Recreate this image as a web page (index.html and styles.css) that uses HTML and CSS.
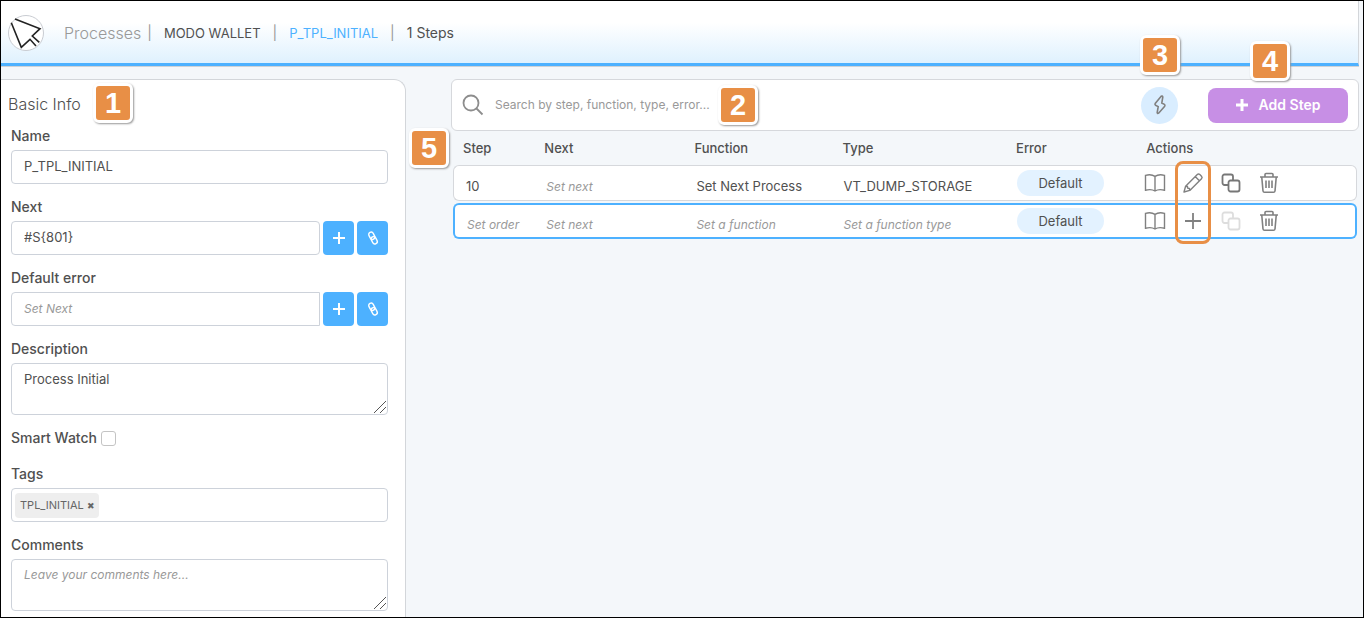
FILE: index.html
```html
<!DOCTYPE html>
<html lang="en">
<head>
<meta charset="utf-8">
<title>Processes</title>
<link rel="stylesheet" href="styles.css">
</head>
<body>
<svg class="sprite" aria-hidden="true">
  <symbol id="plus" viewBox="0 0 16 16"><path d="M8 2v12M2 8h12" fill="none" stroke="currentColor" stroke-width="2"/></symbol>
  <symbol id="plus-thin" viewBox="0 0 22 22"><path d="M11 3v16M3 11h16" fill="none" stroke="currentColor" stroke-width="1.8"/></symbol>
  <symbol id="link" viewBox="0 0 16 16"><g fill="none" stroke="currentColor" stroke-width="1.4" transform="rotate(-28 8 8)"><rect x="5.6" y="1.6" width="4.8" height="7.6" rx="2.4"/><rect x="5.6" y="6.8" width="4.8" height="7.6" rx="2.4"/></g></symbol>
  <symbol id="book" viewBox="0 0 22 20"><path d="M11 3.4C8.5 1.6 4 1.6 1.5 2.3V17.2C4.5 16.4 8.5 16.4 11 18C13.5 16.4 17.5 16.4 20.5 17.2V2.3C18 1.6 13.5 1.6 11 3.4zM11 3.4V18" fill="none" stroke="currentColor" stroke-width="1.4"/></symbol>
  <symbol id="pencil" viewBox="0 0 22 22"><path d="M2 20L3.6 14.2L15.3 2.5Q16.500 1.300 17.800 2.500L19.500 4.200Q20.700 5.500 19.500 6.700L7.800 18.400zM13.200 4.600L17.400 8.800M3.600 14.200L5.500 14.500L5.800 16.200L7.500 16.500L7.800 18.400" fill="none" stroke="currentColor" stroke-width="1.4" stroke-linejoin="round"/></symbol>
  <symbol id="copy" viewBox="0 0 22 22"><rect x="8.5" y="8.5" width="11" height="11" rx="2"/><path d="M8.5 13H4.500a2 2 0 0 1-2-2V4.500a2 2 0 0 1 2-2H11a2 2 0 0 1 2 2V8.500"/></symbol>
  <symbol id="trash" viewBox="0 0 22 22"><path d="M2 5H20M7 5V2.500Q7 1.500 8 1.500H14Q15 1.500 15 2.500V5M3.800 5.500L5 19Q5.200 20.300 6.500 20.300H15.500Q16.800 20.300 17 19L18.200 5.500M8 8.500V16M11 8.500V16M14 8.500V16" fill="none" stroke="currentColor" stroke-width="1.6"/></symbol>
</svg>

<header class="topbar">
  <a class="logo" href="#" aria-label="Home">
    <svg viewBox="0 0 34 34"><path d="M6 3L31 12.700L23.300 20L30.300 26.300M2.300 6.700L12.300 31.300L21 23.300L27 30" fill="none" stroke="#222" stroke-width="1.6"/></svg>
  </a>
  <nav class="crumbs" aria-label="Breadcrumb">
    <a class="crumb-root" href="#">Processes</a>
    <span class="bar">|</span>
    <a href="#">MODO WALLET</a>
    <span class="bar">|</span>
    <a class="crumb-active" href="#">P_TPL_INITIAL</a>
    <span class="bar">|</span>
    <span class="steps">1 Steps</span>
  </nav>
</header>

<div class="workspace">
  <aside class="panel">
    <h1>Basic Info</h1>
    <form class="fields">
      <div class="field">
        <label for="name">Name</label>
        <input class="control" id="name" type="text" value="P_TPL_INITIAL">
      </div>
      <div class="field">
        <label for="next">Next</label>
        <div class="combo">
          <input class="control" id="next" type="text" value="#S{801}">
          <button type="button" aria-label="Add next"><svg><use href="#plus"/></svg></button>
          <button type="button" aria-label="Link next"><svg><use href="#link"/></svg></button>
        </div>
      </div>
      <div class="field">
        <label for="error">Default error</label>
        <div class="combo">
          <input class="control square" id="error" type="text" placeholder="Set Next">
          <button type="button" aria-label="Add error"><svg><use href="#plus"/></svg></button>
          <button type="button" aria-label="Link error"><svg><use href="#link"/></svg></button>
        </div>
      </div>
      <div class="field">
        <label for="description">Description</label>
        <div class="area">
          <textarea class="control" id="description">Process Initial</textarea>
          <svg class="grip" viewBox="0 0 14 14"><path d="M1 13L13 1M7 13L13 7"/></svg>
        </div>
      </div>
      <div class="field check">
        <label for="watch">Smart Watch</label>
        <input id="watch" type="checkbox">
      </div>
      <div class="field">
        <label for="tags">Tags</label>
        <div class="control tags">
          <span class="tag">TPL_INITIAL <button type="button" aria-label="Remove tag">✖</button></span>
          <input id="tags" type="text">
        </div>
      </div>
      <div class="field">
        <label for="comments">Comments</label>
        <div class="area">
          <textarea class="control" id="comments" placeholder="Leave your comments here..."></textarea>
          <svg class="grip" viewBox="0 0 14 14"><path d="M1 13L13 1M7 13L13 7"/></svg>
        </div>
      </div>
    </form>
  </aside>

  <main class="content">
    <div class="toolbar">
      <svg class="search-icon" viewBox="0 0 22 22"><circle cx="9" cy="9" r="7.5"/><path d="M14.500 14.500L20.500 20.500"/></svg>
      <input class="search" type="search" aria-label="Search steps" placeholder="Search by step, function, type, error...">
      <button class="flash" type="button" aria-label="Quick actions"><svg viewBox="0 0 20 22"><path d="M11.200 2.200L5.200 9.400Q4.600 10.600 5.600 11.200L8.200 12.600L7.200 18.600Q7.500 20 8.600 19.200L14.700 12.200Q15.400 11 14.400 10.400L11.800 9L12.800 3Q12.300 1.500 11.200 2.200z"/></svg></button>
      <button class="add" type="button"><svg viewBox="0 0 12 12"><path d="M6 0V12M0 6H12"/></svg>Add Step</button>
    </div>

    <table class="grid">
      <colgroup><col class="c-step"><col class="c-mid"><col class="c-mid"><col class="c-type"><col class="c-error"><col></colgroup>
      <thead>
        <tr><th>Step</th><th>Next</th><th>Function</th><th>Type</th><th>Error</th><th>Actions</th></tr>
      </thead>
      <tbody>
        <tr>
          <td>10</td>
          <td><input type="text" aria-label="Next" placeholder="Set next"></td>
          <td>Set Next Process</td>
          <td>VT_DUMP_STORAGE</td>
          <td class="tight"><button class="pill" type="button">Default</button></td>
          <td class="tight"><div class="actions">
            <button type="button" aria-label="Docs"><svg><use href="#book"/></svg></button>
            <button type="button" aria-label="Edit"><svg><use href="#pencil"/></svg></button>
            <button class="copy" type="button" aria-label="Copy"><svg><use href="#copy"/></svg></button>
            <button type="button" aria-label="Delete"><svg><use href="#trash"/></svg></button>
          </div></td>
        </tr>
        <tr class="editing">
          <td><input type="text" aria-label="Order" placeholder="Set order"></td>
          <td><input type="text" aria-label="Next" placeholder="Set next"></td>
          <td><input type="text" aria-label="Function" placeholder="Set a function"></td>
          <td><input type="text" aria-label="Function type" placeholder="Set a function type"></td>
          <td class="tight"><button class="pill" type="button">Default</button></td>
          <td class="tight"><div class="actions">
            <button type="button" aria-label="Docs"><svg><use href="#book"/></svg></button>
            <button type="button" aria-label="Add"><svg><use href="#plus-thin"/></svg></button>
            <button class="copy" type="button" aria-label="Copy" disabled><svg><use href="#copy"/></svg></button>
            <button type="button" aria-label="Delete"><svg><use href="#trash"/></svg></button>
          </div></td>
        </tr>
      </tbody>
    </table>
  </main>
</div>

<span class="badge b1">1</span>
<span class="badge b2">2</span>
<span class="badge b3">3</span>
<span class="badge b4">4</span>
<span class="badge b5">5</span>
<span class="highlight"></span>
</body>
</html>
```
FILE: styles.css
```css
* { box-sizing: border-box; }

body {
  position: relative;
  display: flex;
  flex-direction: column;
  min-height: 100vh;
  margin: 0;
  border: 1px solid #000;
  background: #f4f7fa;
  color: #505050;
  font: 13px/20px Inter, "Liberation Sans", sans-serif;
}

button, input, textarea { font: inherit; color: inherit; }
button { padding: 0; border: 0; background: none; cursor: pointer; }
a { color: inherit; text-decoration: none; }
::placeholder { color: #999; opacity: 1; font-size: 12px; font-style: italic; }
.sprite { position: absolute; width: 0; height: 0; }

.topbar {
  display: flex;
  align-items: center;
  height: 65px;
  margin-right: 4px;
  padding: 2px 7px 0;
  border-right: 1px solid #d3d6da;
  border-bottom: 3px solid #4db1ff;
  box-shadow: 0 1px 0 #cfd2d6;
  background: linear-gradient(#fff 35%, #dff1fe);
}
.logo {
  width: 36px;
  height: 36px;
  border: 1px solid #c9ccd2;
  border-radius: 50%;
  background: #fff;
}
.logo svg { display: block; width: 34px; height: 34px; }
.crumbs { display: flex; align-items: center; gap: 12px; margin-left: 20px; }
.crumb-root { margin-right: -6px; color: #999; font-size: 16px; font-weight: 300; }
.bar { color: #999; font-size: 14px; }
.crumb-active { color: #4db1ff; }
.steps { font-size: 14px; }

.workspace { display: flex; flex: 1; gap: 45px; padding: 13px 4px 0 0; }
.panel {
  flex: 0 0 405px;
  padding: 12px 17px 4px 7px;
  border: 1px solid #d3d6da;
  border-width: 1px 1px 0 0;
  border-radius: 0 12px 0 0;
  background: #fff;
}
h1 { margin: 0 0 10px; font-size: 16px; font-weight: 300; line-height: 24px; }
.fields { display: flex; flex-direction: column; gap: 13px; padding-left: 3px; }
.field { display: flex; flex-direction: column; gap: 4px; }
.field label { font-size: 14px; font-weight: 500; }
.control {
  width: 100%;
  height: 34px;
  padding: 0 12px 2px;
  border: 1px solid #cdd2da;
  border-radius: 4px;
  outline: 0;
  background: #fff;
}
.combo { display: flex; gap: 3px; }
.combo .control { flex: 1; min-width: 0; }
.combo .square { border-radius: 4px 0 0 4px; }
.combo button {
  display: grid;
  place-items: center;
  width: 31px;
  border-radius: 4px;
  background: #4db1ff;
  color: #fff;
}
.combo svg { width: 16px; height: 16px; }
.area { position: relative; display: flex; }
.area textarea { height: 52px; padding: 5px 12px; resize: none; }
.grip { position: absolute; right: 1px; bottom: 1px; width: 14px; height: 14px; fill: none; stroke: #555; }
.check { flex-direction: row; align-items: center; margin-bottom: 3px; }
.check input {
  width: 15px;
  height: 15px;
  margin: 0;
  border: 1px solid #c4c4c4;
  border-radius: 3px;
  appearance: none;
  background: #fff;
}
.tags { display: flex; align-items: center; padding: 0 3px; }
.tag { flex: none; padding: 2px 5px; border-radius: 4px; background: #eee; color: #666; font-size: 11px; line-height: 21px; }
.tag button { font: 9px/12px "DejaVu Sans", sans-serif; }
.tags input { flex: 1; min-width: 0; border: 0; outline: 0; background: none; }

.content { flex: 1; min-width: 0; }
.toolbar {
  display: flex;
  align-items: center;
  height: 52px;
  padding: 0 10px;
  border: 1px solid #d6d8dc;
  border-radius: 6px;
  background: #fff;
}
.search-icon { flex: none; width: 22px; height: 22px; fill: none; stroke: #8d8d8d; stroke-width: 1.8; }
.search { flex: 1; min-width: 0; margin-left: 11px; padding: 0; border: 0; outline: 0; background: none; font-size: 12px; appearance: none; }
.search::placeholder { font-style: normal; }
.flash {
  display: grid;
  place-items: center;
  width: 37px;
  height: 37px;
  margin-right: 30px;
  border-radius: 50%;
  background: #d9edff;
}
.flash svg { width: 20px; height: 22px; fill: none; stroke: #808080; stroke-width: 1.6; }
.add {
  display: flex;
  align-items: center;
  justify-content: center;
  gap: 11px;
  width: 140px;
  height: 35px;
  border-radius: 8px;
  background: #c78fe5;
  color: #fff;
  font-size: 14px;
  font-weight: 600;
}
.add svg { width: 12px; height: 12px; stroke: #fff; stroke-width: 3; }

.grid { width: calc(100% - 4px); margin: 0 2px; border-collapse: separate; border-spacing: 0 2px; table-layout: fixed; }
.c-step { width: 9%; }
.c-mid { width: 16.6%; }
.c-type { width: 19.2%; }
.c-error { width: 14.4%; }
th { height: 30px; padding: 0 10px; font-weight: 500; text-align: left; }
th:nth-child(n+4) { padding-left: 8px; }
td {
  height: 36px;
  padding: 5px 0 0 12px;
  border: solid #d6d8dc;
  border-width: 1px 0;
  background: #fff;
}
td:nth-child(4) { padding-left: 9px; }
td:first-child { border-left-width: 1px; border-radius: 6px 0 0 6px; }
td:last-child { border-right-width: 1px; border-radius: 0 6px 6px 0; }
.editing td { border-color: #4db1ff; border-top-width: 2px; border-bottom-width: 2px; }
.editing td:first-child { border-left-width: 2px; }
.editing td:last-child { border-right-width: 2px; }
td input { display: block; width: 100%; padding: 0; border: 0; outline: 0; background: none; }
td.tight { padding: 0 0 0 9px; }
td.tight:last-child { padding-left: 6px; }
.pill { display: block; width: 87px; height: 26px; border-radius: 13px; background: #e3f2ff; }
.actions { display: flex; align-items: center; gap: 16px; color: #808080; }
.actions svg { display: block; width: 22px; height: 22px; }
.copy { fill: none; stroke: #777; stroke-width: 1.8; }
.copy:disabled { stroke: #ddd; }

.badge {
  position: absolute;
  width: 40px;
  height: 40px;
  border: 3px solid #fff;
  border-radius: 6px;
  box-shadow: 1px 1px 2px #999;
  background: #e88f46;
  color: #fff;
  font: bold 29px/34px "Liberation Sans", sans-serif;
  text-align: center;
}
.b1 { left: 92px; top: 82px; }
.b2 { left: 717px; top: 84px; }
.b3 { right: 183px; top: 34px; }
.b4 { right: 73px; top: 40px; }
.b5 { left: 408px; top: 127px; }
.highlight {
  position: absolute;
  right: 152px;
  top: 160px;
  width: 36px;
  height: 83px;
  border: 3px solid #e88f46;
  border-radius: 8px;
  pointer-events: none;
}
```
